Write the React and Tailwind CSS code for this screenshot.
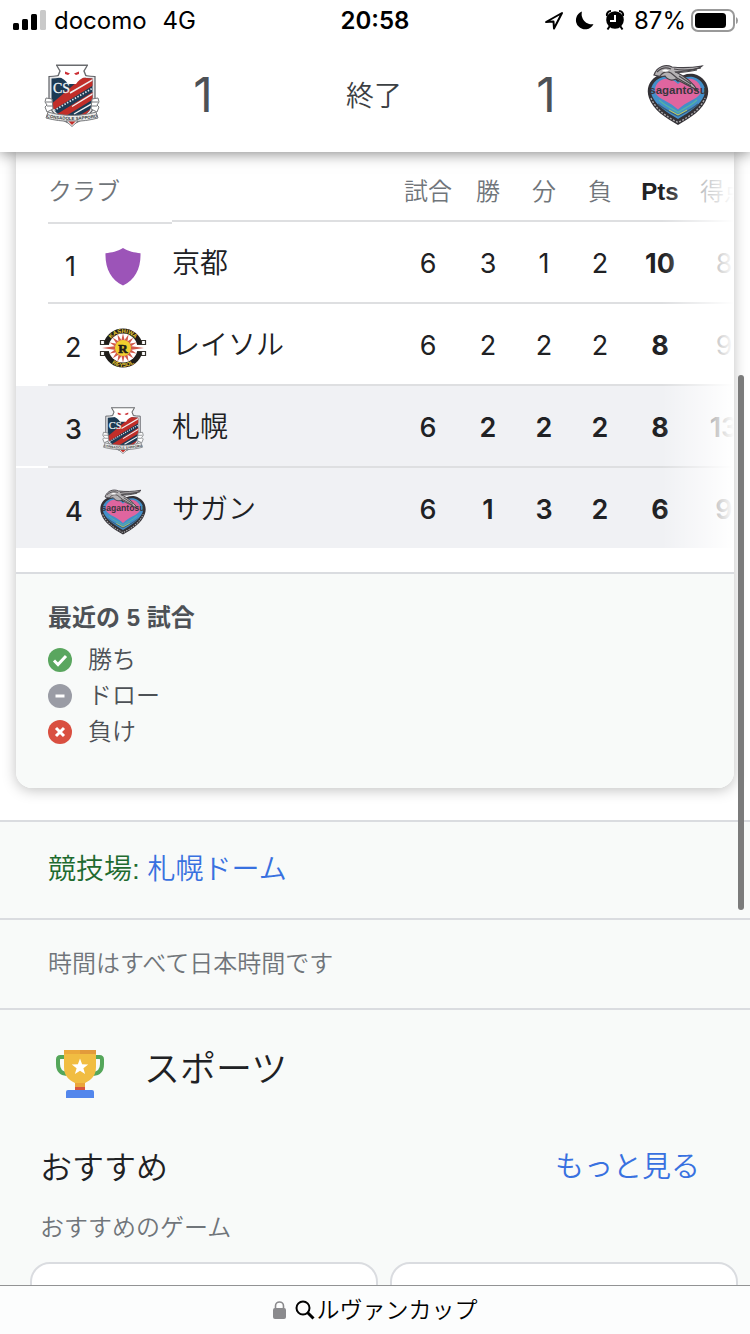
import { useId } from "react";

const columns = [
  { key: "played", label: "試合", width: "w-16" },
  { key: "won", label: "勝", width: "w-14" },
  { key: "drawn", label: "分", width: "w-14" },
  { key: "lost", label: "負", width: "w-14" },
  { key: "points", label: "Pts", width: "w-16", strong: true },
  { key: "goals", label: "得点", width: "w-16" },
];

const clubs = [
  { rank: 1, name: "京都", Crest: KyotoCrest, played: 6, won: 3, drawn: 1, lost: 2, points: 10, goals: 8 },
  { rank: 2, name: "レイソル", Crest: ReysolCrest, played: 6, won: 2, drawn: 2, lost: 2, points: 8, goals: 9 },
  { rank: 3, name: "札幌", Crest: SapporoCrest, played: 6, won: 2, drawn: 2, lost: 2, points: 8, goals: 13, active: true },
  { rank: 4, name: "サガン", Crest: SaganCrest, played: 6, won: 1, drawn: 3, lost: 2, points: 6, goals: 9, active: true },
];

const legend = [
  { label: "勝ち", color: "#5aa65f", path: "M6 12.5l4 4 8-8.5" },
  { label: "ドロー", color: "#9a9ca5", path: "M7.5 12h9" },
  { label: "負け", color: "#d94f40", path: "M8 8l8 8M16 8l-8 8" },
];

/* ---------- Crests ---------- */

function KyotoCrest() {
  return (
    <svg viewBox="0 0 48 48" className="size-12" aria-hidden="true">
      <path d="M24 5c6 3.500 11 4.500 17.500 5.200C42 25 36 37 24 42.500 12 37 6 25 6.500 10.200 13 9.500 18 8.500 24 5z" fill="#9c54b8" />
    </svg>
  );
}

function ReysolCrest() {
  const id = useId();
  const rays = Array.from({ length: 16 }, (_, i) => i * 22.5);
  return (
    <svg viewBox="0 0 48 48" className="size-12" aria-hidden="true">
      <circle cx="24" cy="24" r="17" fill="#fff" />
      <path d="M4.500 20A20 20 0 0143.500 20L37 21A13.800 13.800 0 0011 21z" fill="#1f1d1a" />
      <path d="M4.500 28A20 20 0 0043.500 28L37 27A13.800 13.800 0 0111 27z" fill="#1f1d1a" />
      <circle cx="24" cy="24" r="14.500" fill="#fff" />
      <g fill="#fff" stroke="#33302b" strokeWidth="1.200">
        <path d="M1.500 16.500h4v4h-4zM1.500 27.500h4v4h-4zM42.500 16.500h4v4h-4zM42.500 27.500h4v4h-4z" />
        <path d="M3 20.500h7M3 27.500h7M38 20.500h7M38 27.500h7" />
      </g>
      {rays.map((angle) => (
        <path
          key={angle}
          d={angle % 180 === 0 ? "M31 22L45 24 31 26z" : "M31 22.200L38.500 24 31 25.800z"}
          transform={`rotate(${angle} 24 24)`}
          fill="#d2594a"
        />
      ))}
      <circle cx="24" cy="24" r="8" fill="#f2cf2f" />
      <path id={`${id}-top`} d="M9 24a15 15 0 0130 0" fill="none" />
      <path id={`${id}-bottom`} d="M5 24a19 19 0 0038 0" fill="none" />
      <g fontFamily="Liberation Sans, sans-serif" fontWeight="700" fontSize="5.800" fill="#e9ca34" textAnchor="middle">
        <text><textPath href={`#${id}-top`} startOffset="50%">KASHIWA</textPath></text>
        <text><textPath href={`#${id}-bottom`} startOffset="50%">REYSOL</textPath></text>
      </g>
      <text x="24" y="28.500" fontFamily="Liberation Serif, serif" fontWeight="700" fontSize="13" fill="#1f1d1a" stroke="#1f1d1a" strokeWidth=".6" textAnchor="middle">R</text>
    </svg>
  );
}

function SapporoCrest({ className = "size-12" }) {
  const id = useId();
  return (
    <svg viewBox="0 0 64 64" className={className} aria-hidden="true">
      <clipPath id={id}>
        <path d="M11.500 15.500c6 0 10-1 14-3h13c4 2 8 3 14 3v22c0 11-8 16-20.500 21.500C19.500 53.500 11.500 48.500 11.500 37.500z" />
      </clipPath>
      <path d="M9 13.500c7 0 11-1 15-3h16c4 2 8 3 15 3v24c0 12-9 18-23 24C18 55.500 9 49.500 9 37.500z" fill="#e6e7e8" stroke="#5e6065" strokeWidth="1.200" />
      <g clipPath={`url(#${id})`}>
        <path d="M10 6h44v54H10z" fill="#1c3a54" />
        <path d="M10 42L44 13h10v9L10 49z" fill="#c12e29" />
        <path d="M14 53L54 28v8L16 59z" fill="#c12e29" />
        <path d="M30 58l24-14v7L34 62z" fill="#c12e29" />
        <path d="M30 30L54 16" stroke="#eef0f1" strokeWidth="1.600" />
        <path d="M32 43.500L54 30M34 51L54 39.500" stroke="#eef0f1" strokeWidth="1.400" />
        <path d="M14 47.500L54 24.500" stroke="#dfe4e8" strokeWidth="1.600" strokeDasharray="1.500 1.500" />
      </g>
      <path d="M16 3c7-1.500 24-1.500 32 0l-3 5 1 6c-5 1-8 4-10 7h-8c-2-3-5-6-10-7l1-6z" fill="#fff" />
      <path d="M16 2.200h32M17 3l3 5-2 5M47 3l-3 5 2 5" fill="none" stroke="#696b6e" strokeWidth="1.400" />
      <path d="M25 8.500l5 2-2 1.500-3-1zM39 8.500l-5 2 2 1.500 3-1z" fill="#cc2f35" />
      <text x="21.500" y="30" fontFamily="Liberation Serif, serif" fontSize="14" fill="#eef2f5" stroke="#eef2f5" strokeWidth=".3" textAnchor="middle">CS</text>
      <g fill="#fff" stroke="#77797c" strokeWidth="1">
        <path d="M6 35l6 1 1 10-6 3-2-5 2-2-2-3zM58 35l-6 1-1 10 6 3 2-5-2-2 2-3z" />
        <path d="M6 39h6M7 43h6M58 39h-6M57 43h-6" />
      </g>
      <path d="M8 49c14 4.500 34 4.500 48 0l2 6c-16 4.500-36 4.500-52 0z" fill="#ececec" stroke="#77797c" />
      <path id={`${id}-name`} d="M8 54.500q24 5 48 0" fill="none" />
      <text fontFamily="Liberation Sans, sans-serif" fontWeight="700" fontSize="4.400" fill="#333638" textAnchor="middle">
        <textPath href={`#${id}-name`} startOffset="50%">CONSADOLE SAPPORO</textPath>
      </text>
      <path d="M26 58h12l-6 5.500z" fill="#fff" stroke="#77797c" />
      <path d="M28.500 58.500h7L32 62z" fill="#c12e29" />
    </svg>
  );
}

function SaganCrest({ className = "size-12" }) {
  return (
    <svg viewBox="0 0 64 64" className={className} aria-hidden="true">
      <path d="M16 11C5 14-1 24 3 35c4 12 17 20 29 27 12-7 25-15 29-27 4-11-2-21-13-24-7-1-12 1-16 5-4-4-9-6-16-5z" fill="#333136" />
      <path d="M5 35c5 12 16 19 27 24.500C43 54 54 47 59 35" fill="none" stroke="#aaa8aa" strokeWidth="1.400" strokeDasharray="2 1.500" />
      <path d="M17 14C7 17 3 25 6 33c4 9 14 16 26 23 12-7 22-14 26-23 3-8-1-16-11-19-6-1-11 1-15 5-4-4-9-6-15-5z" fill="#438fc9" />
      <path d="M12 41c5 5 13 8 20 12 7-4 15-7 20-12" fill="none" stroke="#3b5f7d" strokeWidth="1.400" />
      <path d="M13 37c6 6 13 8 19 12.500C38 45 45 43 51 37" fill="none" stroke="#56b5a0" strokeWidth="1.200" />
      <path d="M23 47l9 5 9-5" fill="none" stroke="#c5cf55" strokeWidth="1" />
      <path d="M18 16c-7 2-11 9-8 15 4 6 13 7 22 15.500C41 38 50 37 54 31c3-6-1-13-8-15-6-1-10 1-14 5-4-4-8-6-14-5z" fill="#df659f" />
      <path d="M8 12c3-9 12-11 18-8 10 1 18 1 30-1-5 5-17 5-26 6 6 3 16 9 22 19-7-5-16-8-22-12-4 2-8 1-11-3-3 1-8 0-11-1z" fill="#b5b2b4" stroke="#454247" strokeWidth="1.200" />
      <path d="M11 9c4-4 9-5 14-3M14 13c3-4 7-5 11-3l6 5M28 6c9 2 18 1 27-1M29 9c6 1 12 0 22-2M31 15l14 8M33 13l12 8" fill="none" stroke="#4a474b" strokeWidth="1.200" />
      <path d="M16 8c2-2 5-2 7 0-2 1-5 1-7 0z" fill="#fff" />
      <text x="32" y="30.500" fontFamily="Liberation Sans, sans-serif" fontWeight="700" fontSize="11.500" fill="#39363d" textAnchor="middle">sagantosu</text>
    </svg>
  );
}

function Trophy() {
  return (
    <svg viewBox="0 0 48 48" className="size-12" aria-hidden="true">
      <path d="M9 7H4.500Q2 7 2 9.500V14c0 6 3 9.500 9 10M39 7h4.500Q46 7 46 9.500V14c0 6-3 9.500-9 10" fill="none" stroke="#54a65a" strokeWidth="4" />
      <path d="M8 0h32v17c0 9-5 13-11 16v5H19v-5C13 30 8 26 8 17z" fill="#f1bd42" />
      <path d="M8 0h16v4H8z" fill="#eba93c" />
      <path d="M24 0h16v4H24z" fill="#e29a3b" />
      <path d="M19 33h10v4H19z" fill="#eba43a" />
      <path d="M19 37h10v3H19z" fill="#d8543f" />
      <path d="M12 40h24q2 0 2 2v6H10v-6q0-2 2-2z" fill="#5386ec" />
      <path d="M24 8.500l2.100 5.700 6.100.2-4.800 3.800 1.700 5.900-5.100-3.400-5.100 3.400 1.700-5.900-4.800-3.800 6.100-.2z" fill="#fff" />
    </svg>
  );
}

/* ---------- Page parts ---------- */

function StatusBar() {
  return (
    <div className="grid h-[42px] grid-cols-[1fr_auto_1fr] items-center px-3 font-[Inter,sans-serif] text-2xl text-black">
      <div className="flex items-center gap-2">
        <svg viewBox="0 0 34 22" className="h-[22px] w-[34px]" aria-hidden="true">
          <rect x="1" y="13" width="6" height="7" rx="1.500" />
          <rect x="10" y="9" width="6" height="11" rx="1.500" />
          <rect x="19" y="4" width="6" height="16" rx="1.500" />
          <rect x="28" y="0" width="6" height="20" rx="1.500" fill="#c9c9c9" />
        </svg>
        <span>docomo</span>
        <span className="pl-2">4G</span>
      </div>
      <span className="font-semibold">20:58</span>
      <div className="flex items-center justify-end gap-2">
        <svg viewBox="0 0 84 24" className="h-6 w-[84px]" aria-hidden="true">
          <path d="M4 13L20 4l-8 15.500-.5-7z" fill="none" stroke="#000" strokeWidth="2" strokeLinejoin="round" />
          <path d="M40 2.500a9.200 9.200 0 1011.500 12.500A10 10 0 0140 2.500z" />
          <circle cx="73" cy="11" r="8.800" />
          <path d="M65 7a4 4 0 014-5M81 7a4 4 0 00-4-5M67.500 17.500l-2 3M78.500 17.500l2 3" fill="none" stroke="#000" strokeWidth="2" />
          <path d="M73 6v6h-5" fill="none" stroke="#fff" strokeWidth="2" />
        </svg>
        <span>87%</span>
        <svg viewBox="0 0 48 24" className="-ml-1 h-6 w-12" aria-hidden="true">
          <rect x="2" y="1" width="42" height="21" rx="6" fill="none" stroke="#999" strokeWidth="2" />
          <rect x="5" y="4" width="31" height="15" rx="3.500" />
          <path d="M46 8q2 1 2 3.500t-2 3.500z" fill="#999" />
        </svg>
      </div>
    </div>
  );
}

function ScoreHeader() {
  return (
    <div className="grid h-[110px] grid-cols-[144px_118px_1fr_120px_144px] place-items-center pb-1 text-[#4d5156]">
      <SapporoCrest className="size-16" />
      <span className="font-[Inter,sans-serif] text-5xl">1</span>
      <span className="pt-1 text-[28px] font-[350] text-[#3c4043]">終了</span>
      <span className="font-[Inter,sans-serif] text-5xl">1</span>
      <SaganCrest className="size-16" />
    </div>
  );
}

function StandingsTable() {
  return (
    <div className="relative overflow-hidden bg-white pb-6">
      <table className="w-[calc(100%+22px)] table-fixed border-separate border-spacing-0 text-[28px]">
        <thead>
          <tr className="h-[70px] text-2xl text-[#70757a]">
            <td className="w-8" />
            <th className="w-[124px] p-0 pt-2.5 text-left font-[350]">クラブ</th>
            <td className="border-b-2 border-[#dedfe1]" />
            {columns.map((col) => (
              <th
                key={col.key}
                className={`${col.width} whitespace-nowrap border-b-2 border-[#dedfe1] p-0 pt-3 ${
                  col.strong ? "font-bold text-[#202124]" : "font-[350]"
                }`}
              >
                {col.label}
              </th>
            ))}
          </tr>
        </thead>
        <tbody>
          {clubs.map(({ Crest, ...club }, index) => {
            const first = index === 0;
            const last = index === clubs.length - 1;
            const line = last ? "" : "border-b-2 border-[#dedfe1]";
            const height = last ? "h-20" : "h-[82px]";
            return (
              <tr key={club.rank} className={club.active ? `${height} bg-[#f0f1f4]` : height}>
                <td className={last ? "" : "border-b-2 border-white"} />
                <td className={`p-0 pt-2 ${first ? "border-t-2" : ""} ${line}`}>
                  <div className="flex items-center gap-3.5 pl-[17px] font-[Inter,sans-serif]">
                    <span className={`w-5 text-[27px] ${club.active ? "font-medium" : ""}`}>{club.rank}</span>
                    <Crest />
                  </div>
                </td>
                <td className={`p-0 pt-1 font-[350] ${line}`}>{club.name}</td>
                {columns.map((col) => (
                  <td
                    key={col.key}
                    className={`p-0 pt-1 text-center font-[Inter,sans-serif] text-[27px] ${line} ${
                      col.strong ? "font-bold" : club.active && col.key !== "played" ? "font-semibold" : club.active ? "font-medium" : ""
                    }`}
                  >
                    {club[col.key]}
                  </td>
                ))}
              </tr>
            );
          })}
        </tbody>
      </table>
      <div className="absolute inset-y-0 right-0 w-18 bg-linear-to-r from-white/0 to-white" />
    </div>
  );
}

function Legend() {
  return (
    <div className="border-t-2 border-[#dadce0] bg-[#f8faf9] px-8 pt-6 pb-[38px] text-2xl text-[#4d5156]">
      <h2 className="mb-1 leading-10 font-bold">最近の 5 試合</h2>
      <ul>
        {legend.map((item) => (
          <li key={item.label} className="flex h-9 items-center gap-4 font-[350]">
            <svg viewBox="0 0 24 24" className="size-6" aria-hidden="true">
              <circle cx="12" cy="12" r="12" fill={item.color} />
              <path d={item.path} fill="none" stroke="#fff" strokeWidth="3" />
            </svg>
            {item.label}
          </li>
        ))}
      </ul>
    </div>
  );
}

function SportsPanel() {
  return (
    <section className="border-t-2 border-[#dadce0] pt-6 font-[350] text-[#202124]">
      <div className="flex h-20 items-center gap-10 px-14">
        <Trophy />
        <h2 className="pb-2 text-4xl font-[350]">スポーツ</h2>
      </div>
      <div className="mt-7 flex h-[52px] items-center justify-between pr-[50px] pl-10">
        <h3 className="text-[32px] font-[350]">おすすめ</h3>
        <a href="#more" className="text-[29px] text-[#3871e0]">
          もっと見る
        </a>
      </div>
      <p className="mt-3.5 px-10 text-2xl leading-10 text-[#70757a]">おすすめのゲーム</p>
      <div className="mt-3.5 grid grid-cols-2 gap-3 pr-3 pl-[30px]">
        <div className="h-40 rounded-[20px] border-2 border-[#dadce0] bg-white" />
        <div className="h-40 rounded-[20px] border-2 border-[#dadce0] bg-white" />
      </div>
    </section>
  );
}

function AddressBar() {
  return (
    <footer className="flex h-[49px] shrink-0 items-center justify-center border-t border-[#929394] bg-[#fcfdfd] text-[23px] font-[350] text-black">
      <svg viewBox="0 0 14 20" className="mr-2 h-5 w-3.5" aria-hidden="true">
        <rect x="0" y="8" width="13" height="11" rx="2" fill="#8a8a8d" />
        <path d="M2.500 9V6a4 4 0 018 0v3" fill="none" stroke="#8a8a8d" strokeWidth="1.600" />
      </svg>
      <svg viewBox="0 0 20 20" className="mr-0.5 size-5" aria-hidden="true">
        <circle cx="8" cy="8" r="6.500" fill="none" stroke="#000" strokeWidth="2" />
        <path d="M12.500 12.500l6 6" stroke="#000" strokeWidth="3" />
      </svg>
      ルヴァンカップ
    </footer>
  );
}

export default function App() {
  return (
    <div
      lang="ja"
      className="relative flex h-screen flex-col overflow-hidden bg-white font-['Liberation_Sans','Noto_Sans_CJK_JP',sans-serif] text-[#202124]"
    >
      <header className="z-10 shrink-0 bg-white shadow-[0_1px_14px_rgba(0,0,0,0.5)]">
        <StatusBar />
        <ScoreHeader />
      </header>

      <main className="min-h-0 flex-1 overflow-hidden bg-[#f8faf9]">
        <div className="bg-white px-4 pb-8">
          <div className="overflow-hidden rounded-b-2xl shadow-[0_2px_14px_rgba(0,0,0,0.25)]">
            <StandingsTable />
            <Legend />
          </div>
        </div>
        <p className="border-t-2 border-[#dadce0] px-12 py-6 text-[28px] leading-12 font-[350] text-[#1e6b30]">
          競技場:{" "}
          <a href="#stadium" className="text-[#3871e0]">
            札幌ドーム
          </a>
        </p>
        <p className="border-t-2 border-[#dadce0] px-12 py-6 text-2xl leading-10 font-[350] text-[#70757a]">
          時間はすべて日本時間です
        </p>
        <SportsPanel />
      </main>

      <AddressBar />

      {/* Page scroll indicator */}
      <div className="absolute top-[375px] right-1.5 z-20 h-[535px] w-1.5 rounded-full bg-[#7b7b7b]" />
    </div>
  );
}
